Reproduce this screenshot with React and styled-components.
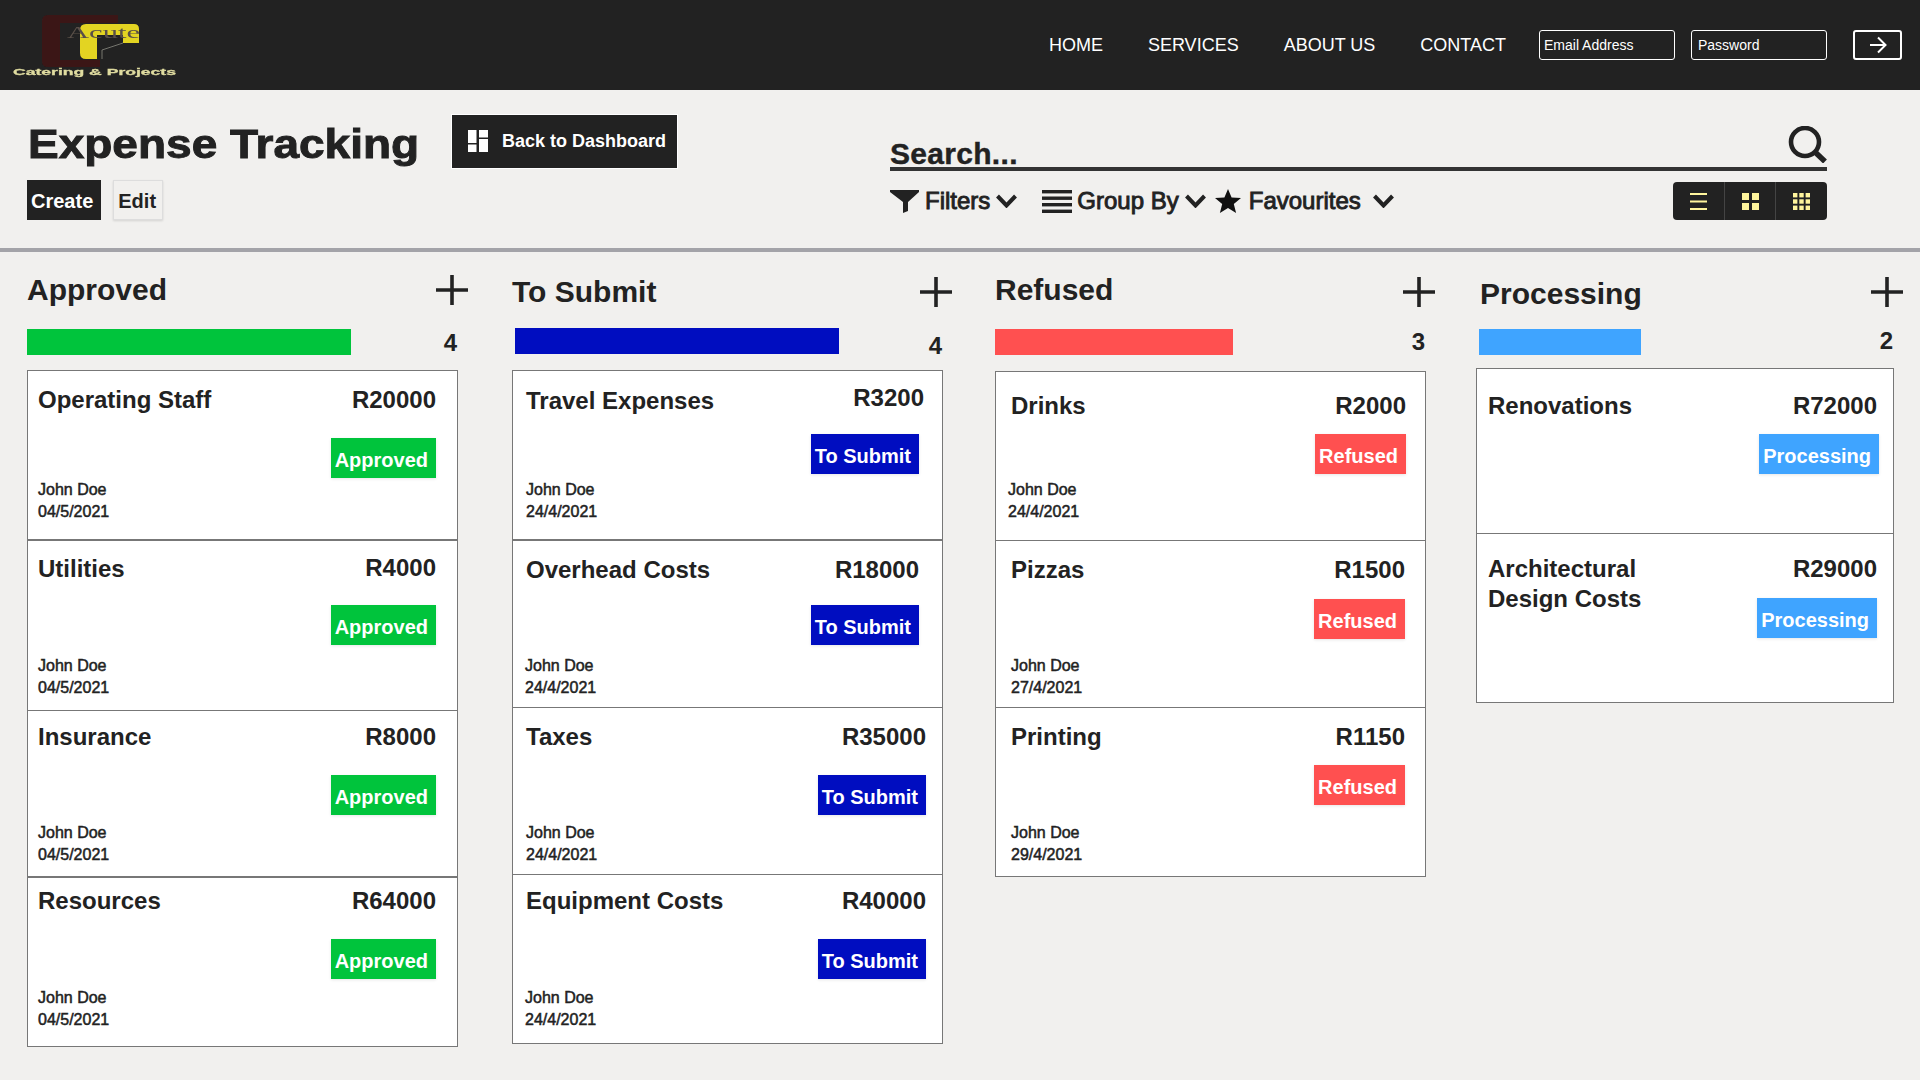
import React from "react";
import styled, { createGlobalStyle } from "styled-components";

const Global = createGlobalStyle`
  html, body { margin: 0; padding: 0; background: #f1f0ee; }
  body { font-family: "Liberation Sans", Arial, sans-serif; color: #222; }
  * { box-sizing: border-box; }
`;

const Page = styled.div`
  width: 1920px;
  height: 1080px;
  overflow: hidden;
  background: #f1f0ee;
`;

const TopBar = styled.header`
  height: 90px;
  background: #222;
  display: flex;
  align-items: center;
  justify-content: space-between;
  padding-right: 18px;
`;
const LogoSvg = styled.svg`
  display: block;
  width: 180px;
  height: 90px;
`;
const TopRight = styled.div`
  display: flex;
  align-items: center;
`;
const Nav = styled.nav`
  display: flex;
  gap: 45px;
  margin-right: 33px;
`;
const NavLink = styled.a`
  color: #fff;
  font-size: 18px;
  line-height: 30px;
`;
const LoginInput = styled.input`
  width: 136px;
  height: 30px;
  margin-right: ${(p) => p.$mr}px;
  padding: 0 0 0 ${(p) => p.$pl}px;
  background: transparent;
  border: 1px solid #fff;
  border-radius: 3px;
  color: #fff;
  font: 14px "Liberation Sans", Arial, sans-serif;
  &::placeholder { color: #fff; opacity: 1; }
`;
const GoButton = styled.button`
  width: 49px;
  height: 30px;
  padding: 0;
  display: flex;
  align-items: center;
  justify-content: center;
  background: transparent;
  border: 2px solid #fff;
  border-radius: 3px;
  color: #fff;
`;

const PageHead = styled.section`
  height: 162px;
  display: flex;
  padding-left: 27px;
  border-bottom: 4px solid #a3a3a8;
`;
const HeadLeft = styled.div`
  width: 863px;
  padding-top: 24px;
`;
const TitleRow = styled.div`
  display: flex;
  align-items: center;
  height: 54px;
`;
const Title = styled.h1`
  margin: 5px 0 0 1px;
  width: 423px;
  font-size: 40px;
  line-height: 50px;
  font-weight: 700;
  -webkit-text-stroke: 0.9px #222;
  transform: scaleX(1.15);
  transform-origin: left center;
  white-space: nowrap;
`;
const BackButton = styled.button`
  width: 227px;
  height: 55px;
  padding: 0 0 0 16px;
  display: flex;
  align-items: center;
  gap: 14px;
  background: #222;
  border: 1px solid #fff;
  color: #fff;
  font: 700 18px "Liberation Sans", Arial, sans-serif;
  white-space: nowrap;
`;
const Actions = styled.div`
  display: flex;
  gap: 12px;
  margin-top: 12px;
`;
const ActionButton = styled.button`
  height: 40px;
  padding: 3px ${(p) => (p.$primary ? 8 : 6)}px 0 4px;
  background: ${(p) => (p.$primary ? "#222" : "#f1f0ee")};
  color: ${(p) => (p.$primary ? "#fff" : "#222")};
  border: ${(p) => (p.$primary ? "0" : "1px solid #ddd")};
  box-shadow: ${(p) => (p.$primary ? "none" : "0 1px 2px rgba(0,0,0,.12)")};
  font: 700 20px "Liberation Sans", Arial, sans-serif;
`;
const HeadRight = styled.div`
  width: 937px;
`;
const SearchBar = styled.div`
  margin-top: 36px;
  height: 45px;
  display: flex;
  align-items: flex-end;
  justify-content: space-between;
  border-bottom: 4px solid #333;
`;
const SearchText = styled.span`
  font-size: 30px;
  font-weight: 700;
  line-height: 36px;
  margin-bottom: -5px;
  letter-spacing: 0.3px;
  -webkit-text-stroke: 0.4px #222;
`;
const SearchGlyph = styled.svg`
  display: block;
  margin-bottom: 4px;
`;
const FilterRow = styled.div`
  margin-top: 11px;
  height: 38px;
  display: flex;
  align-items: center;
`;
const FilterItem = styled.div`
  display: flex;
  align-items: center;
  margin-right: ${(p) => p.$mr}px;
`;
const FilterLabel = styled.span`
  font-size: 24px;
  line-height: 38px;
  -webkit-text-stroke: 0.9px #222;
  margin: 0 ${(p) => p.$after}px 0 ${(p) => p.$before}px;
  white-space: nowrap;
`;
const ViewToggle = styled.div`
  margin-left: auto;
  width: 154px;
  height: 38px;
  display: flex;
  background: #222;
  border-radius: 4px;
  overflow: hidden;
`;
const ViewCell = styled.div`
  flex: 1;
  display: flex;
  align-items: center;
  justify-content: center;
  & + & { border-left: 1px solid #444; }
`;

const Board = styled.main`
  display: grid;
  grid-template-columns: 485px 483px 481px 418px;
  padding-left: 27px;
  align-items: start;
`;
const Column = styled.div`
  width: ${(p) => p.$width}px;
`;
const ColHead = styled.div`
  height: ${(p) => p.$h}px;
  display: flex;
  justify-content: space-between;
  align-items: flex-start;
`;
const ColTitle = styled.h2`
  margin: ${(p) => p.$top}px 0 0 ${(p) => p.$left}px;
  font-size: 30px;
  line-height: 36px;
  font-weight: 700;
`;
const PlusIcon = styled.svg`
  display: block;
  margin: ${(p) => p.$top}px ${(p) => p.$right}px 0 0;
`;
const BarRow = styled.div`
  height: 26px;
  display: flex;
  justify-content: space-between;
  margin-bottom: ${(p) => p.$mb}px;
`;
const Bar = styled.div`
  height: 26px;
  margin-left: ${(p) => p.$left}px;
  width: ${(p) => p.$w}px;
  background: ${(p) => p.$color};
`;
const Count = styled.span`
  font-size: 24px;
  font-weight: 700;
  line-height: 26px;
  margin: ${(p) => p.$top}px 1px 0 0;
`;
const Card = styled.div`
  background: #fff;
  border: 1px solid #777;
`;
const Row = styled.article`
  height: ${(p) => p.$h}px;
  display: grid;
  grid-template-columns: 1fr auto;
  border-bottom: ${(p) => p.$line}px solid #777;
`;
const RowLeft = styled.div`
  display: flex;
  flex-direction: column;
  align-items: flex-start;
  min-width: 0;
`;
const RowRight = styled.div`
  display: flex;
  flex-direction: column;
  align-items: flex-end;
`;
const Name = styled.h3`
  margin: ${(p) => p.$top}px 0 0 ${(p) => p.$left}px;
  font-size: 24px;
  line-height: 30px;
  font-weight: 700;
  max-width: 200px;
`;
const Amount = styled.div`
  margin: ${(p) => p.$top}px ${(p) => p.$right}px 0 0;
  font-size: 24px;
  line-height: 30px;
  font-weight: 700;
`;
const Badge = styled.div`
  height: 40px;
  margin: ${(p) => p.$top}px ${(p) => p.$right}px 0 0;
  padding: 0 ${(p) => p.$pr}px 0 4px;
  background: ${(p) => p.$color};
  color: #fff;
  font-size: 20px;
  font-weight: 700;
  line-height: 45px;
  box-shadow: 0 1px 3px rgba(0, 0, 0, 0.1);
  white-space: nowrap;
`;
const Person = styled.div`
  margin: ${(p) => p.$top}px 0 0 ${(p) => p.$left}px;
  font-size: 16px;
  line-height: 22px;
  -webkit-text-stroke: 0.5px #222;
`;

const Logo = () => (
  <LogoSvg viewBox="0 0 180 90">
    <defs>
      <filter id="soft"><feGaussianBlur stdDeviation="0.45" /></filter>
    </defs>
    <g filter="url(#soft)">
      <path d="M48 15H118V23H60V60H100V67H48Q42 67 42 61V21Q42 15 48 15Z" fill="#3b1716" />
      <path d="M86 24H134Q139 24 139 29V43H123V35H97V59H86Q80 59 80 53V30Q80 24 86 24Z" fill="#e3d421" />
      <path d="M123 43L102 50V59" stroke="#8a8a80" strokeWidth="0.8" fill="none" />
      <text x="67" y="37.5" fontFamily="Liberation Serif, serif" fontSize="16" textLength="73" lengthAdjust="spacingAndGlyphs" fill="#5a5048">Acute</text>
      <text x="13" y="75" fontFamily="Liberation Sans, sans-serif" fontWeight="700" fontSize="9.5" textLength="163" lengthAdjust="spacingAndGlyphs" fill="#e0dca0" stroke="#e0dca0" strokeWidth="0.3">Catering &amp; Projects</text>
    </g>
  </LogoSvg>
);

const ArrowIcon = () => (
  <svg width="22" height="20" viewBox="0 0 22 20" fill="none" stroke="#fff" strokeWidth="2">
    <path d="M3 10h15M11 2.5l7.5 7.5-7.5 7.5" />
  </svg>
);
const DashIcon = () => (
  <svg width="20" height="22" viewBox="0 0 20 22" fill="#fff">
    <rect x="0" y="0" width="8.5" height="13" />
    <rect x="0" y="14.5" width="8.5" height="7.5" />
    <rect x="11" y="0" width="9" height="7.5" />
    <rect x="11" y="9" width="9" height="13" />
  </svg>
);
const SearchIcon = () => (
  <SearchGlyph width="39" height="37" viewBox="0 0 39 37" fill="none" stroke="#222" strokeWidth="4.6">
    <circle cx="17" cy="16" r="14" />
    <path d="M27 26l10 9.5" strokeWidth="5.5" />
  </SearchGlyph>
);
const FunnelIcon = () => (
  <svg width="29" height="23" viewBox="0 0 29 23" fill="#222">
    <path d="M0 0h29v2L18 12v9l-5 2V12L0 2z" />
  </svg>
);
const ListBars = () => (
  <svg width="30" height="23" viewBox="0 0 30 23" fill="#222">
    <rect y="0" width="30" height="3.4" />
    <rect y="6.5" width="30" height="3.4" />
    <rect y="13" width="30" height="3.4" />
    <rect y="19.6" width="30" height="3.4" />
  </svg>
);
const StarIcon = () => (
  <svg width="28" height="24" viewBox="0 0 28 24" fill="#111">
    <path d="M14 0l3.6 8.4 9.4.7-7.2 5.9 2.3 9L14 19.1 5.9 24l2.3-9L1 9.1l9.4-.7z" />
  </svg>
);
const Chevron = () => (
  <svg width="21" height="14" viewBox="0 0 21 14" fill="none" stroke="#222" strokeWidth="4">
    <path d="M1.5 2l9 9.5 9-9.5" />
  </svg>
);
const ViewLines = () => (
  <svg width="17" height="17" viewBox="0 0 17 17" fill="#fff59d">
    <rect y="0" width="17" height="2" />
    <rect y="7.5" width="17" height="2" />
    <rect y="15" width="17" height="2" />
  </svg>
);
const ViewGrid = ({ n }) => {
  const cell = n === 2 ? 7 : 4.4;
  const gap = n === 2 ? 3 : 1.9;
  const cells = [];
  for (let y = 0; y < n; y++)
    for (let x = 0; x < n; x++)
      cells.push(<rect key={`${x}-${y}`} x={x * (cell + gap)} y={y * (cell + gap)} width={cell} height={cell} />);
  return (
    <svg width="17" height="17" viewBox="0 0 17 17" fill="#fff59d">
      {cells}
    </svg>
  );
};
const Plus = ({ top, right }) => (
  <PlusIcon $top={top} $right={right} width="32" height="30" viewBox="0 0 32 30" fill="none" stroke="#222" strokeWidth="3.6">
    <path d="M0 15h32M16 0v30" />
  </PlusIcon>
);

const GREEN = "#00c43c";
const BLUE = "#000dc0";
const RED = "#ff5050";
const SKY = "#3fa4ff";

const columns = [
  {
    title: "Approved", width: 431, headH: 77, titleTop: 20, titleLeft: 0, plusTop: 23, plusRight: -10,
    barLeft: 0, barW: 324, color: GREEN, count: 4, countTop: 1, barMb: 15, pr: 8,
    rows: [
      { h: 170, line: 2, name: "Operating Staff", amount: "R20000", date: "04/5/2021", n: [14, 10], a: [14, 21], b: [23, 21], p: [64, 10] },
      { h: 170, line: 1, name: "Utilities", amount: "R4000", date: "04/5/2021", n: [13, 10], a: [12, 21], b: [22, 21], p: [71, 10] },
      { h: 167, line: 2, name: "Insurance", amount: "R8000", date: "04/5/2021", n: [11, 10], a: [11, 21], b: [23, 21], p: [70, 10] },
      { h: 168, line: 0, name: "Resources", amount: "R64000", date: "04/5/2021", n: [8, 10], a: [8, 21], b: [23, 21], p: [71, 10] },
    ],
  },
  {
    title: "To Submit", width: 431, headH: 76, titleTop: 22, titleLeft: 0, plusTop: 25, plusRight: -9,
    barLeft: 3, barW: 324, color: BLUE, count: 4, countTop: 5, barMb: 16, pr: 8,
    rows: [
      { h: 170, line: 2, name: "Travel Expenses", amount: "R3200", date: "24/4/2021", n: [15, 13], a: [12, 18], b: [21, 23], p: [63, 13] },
      { h: 167, line: 1, name: "Overhead Costs", amount: "R18000", date: "24/4/2021", n: [14, 13], a: [14, 23], b: [20, 23], p: [70, 12] },
      { h: 167, line: 1, name: "Taxes", amount: "R35000", date: "24/4/2021", n: [14, 13], a: [14, 16], b: [23, 16], p: [70, 13] },
      { h: 168, line: 0, name: "Equipment Costs", amount: "R40000", date: "24/4/2021", n: [11, 13], a: [11, 16], b: [23, 16], p: [71, 12] },
    ],
  },
  {
    title: "Refused", width: 431, headH: 77, titleTop: 20, titleLeft: 0, plusTop: 25, plusRight: -9,
    barLeft: 0, barW: 238, color: RED, count: 3, countTop: 0, barMb: 16, pr: 8,
    rows: [
      { h: 169, line: 1, name: "Drinks", amount: "R2000", date: "24/4/2021", n: [19, 15], a: [19, 19], b: [13, 19], p: [58, 12] },
      { h: 167, line: 1, name: "Pizzas", amount: "R1500", date: "27/4/2021", n: [14, 15], a: [14, 20], b: [14, 20], p: [70, 15] },
      { h: 168, line: 0, name: "Printing", amount: "R1150", date: "29/4/2021", n: [14, 15], a: [14, 20], b: [13, 20], p: [70, 15] },
    ],
  },
  {
    title: "Processing", width: 418, headH: 77, titleTop: 24, titleLeft: 4, plusTop: 25, plusRight: -9,
    barLeft: 3, barW: 162, color: SKY, count: 2, countTop: -1, barMb: 13, pr: 8,
    rows: [
      { h: 165, line: 1, name: "Renovations", amount: "R72000", n: [22, 11], a: [22, 16], b: [13, 14] },
      { h: 168, line: 0, name: "Architectural Design Costs", amount: "R29000", n: [20, 11], a: [20, 16], b: [14, 16] },
    ],
  },
];

export default function App() {
  return (
    <Page>
      <Global />
      <TopBar>
        <Logo />
        <TopRight>
          <Nav>
            <NavLink>HOME</NavLink>
            <NavLink>SERVICES</NavLink>
            <NavLink>ABOUT US</NavLink>
            <NavLink>CONTACT</NavLink>
          </Nav>
          <LoginInput $mr={16} $pl={4} placeholder="Email Address" />
          <LoginInput $mr={26} $pl={6} placeholder="Password" />
          <GoButton aria-label="Sign in"><ArrowIcon /></GoButton>
        </TopRight>
      </TopBar>

      <PageHead>
        <HeadLeft>
          <TitleRow>
            <Title>Expense Tracking</Title>
            <BackButton><DashIcon />Back to Dashboard</BackButton>
          </TitleRow>
          <Actions>
            <ActionButton $primary>Create</ActionButton>
            <ActionButton>Edit</ActionButton>
          </Actions>
        </HeadLeft>
        <HeadRight>
          <SearchBar>
            <SearchText>Search...</SearchText>
            <SearchIcon />
          </SearchBar>
          <FilterRow>
            <FilterItem $mr={25}>
              <FunnelIcon />
              <FilterLabel $before={6} $after={6}>Filters</FilterLabel>
              <Chevron />
            </FilterItem>
            <FilterItem $mr={8}>
              <ListBars />
              <FilterLabel $before={5} $after={6}>Group By</FilterLabel>
              <Chevron />
            </FilterItem>
            <FilterItem $mr={0}>
              <StarIcon />
              <FilterLabel $before={7} $after={12}>Favourites</FilterLabel>
              <Chevron />
            </FilterItem>
            <ViewToggle>
              <ViewCell><ViewLines /></ViewCell>
              <ViewCell><ViewGrid n={2} /></ViewCell>
              <ViewCell><ViewGrid n={3} /></ViewCell>
            </ViewToggle>
          </FilterRow>
        </HeadRight>
      </PageHead>

      <Board>
        {columns.map((c) => (
          <Column key={c.title} $width={c.width}>
            <ColHead $h={c.headH}>
              <ColTitle $top={c.titleTop} $left={c.titleLeft}>{c.title}</ColTitle>
              <Plus top={c.plusTop} right={c.plusRight} />
            </ColHead>
            <BarRow $mb={c.barMb}>
              <Bar $left={c.barLeft} $w={c.barW} $color={c.color} />
              <Count $top={c.countTop}>{c.count}</Count>
            </BarRow>
            <Card>
              {c.rows.map((r) => (
                <Row key={r.name} $h={r.h} $line={r.line}>
                  <RowLeft>
                    <Name $top={r.n[0]} $left={r.n[1]}>{r.name}</Name>
                    {r.date && (
                      <Person $top={r.p[0]} $left={r.p[1]}>
                        John Doe
                        <br />
                        {r.date}
                      </Person>
                    )}
                  </RowLeft>
                  <RowRight>
                    <Amount $top={r.a[0]} $right={r.a[1]}>{r.amount}</Amount>
                    <Badge $top={r.b[0]} $right={r.b[1]} $color={c.color} $pr={c.pr}>{c.title}</Badge>
                  </RowRight>
                </Row>
              ))}
            </Card>
          </Column>
        ))}
      </Board>
    </Page>
  );
}
